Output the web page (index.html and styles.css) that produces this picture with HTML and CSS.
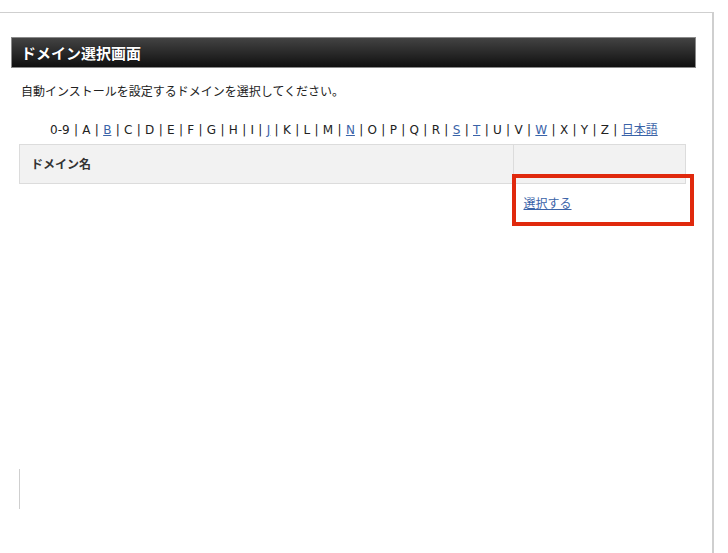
FILE: index.html
```html
<!DOCTYPE html>
<html lang="ja">
<head>
<meta charset="utf-8">
<link rel="stylesheet" href="styles.css">
</head>
<body>
<div class="frame">
  <div class="content">
    <h1 class="title">ドメイン選択画面</h1>
    <p class="intro">自動インストールを設定するドメインを選択してください。</p>
    <p class="alpha">0-9 | A | <a href="#">B</a> | C | D | E | F | G | H | I | <a href="#">J</a> | K | L | M | <a href="#">N</a> | O | P | Q | R | <a href="#">S</a> | <a href="#">T</a> | U | V | <a href="#">W</a> | X | Y | Z | <a href="#" class="jp">日本語</a></p>
    <div class="tablewrap">
      <table class="domains">
        <thead>
          <tr><th class="name">ドメイン名</th><th class="act"></th></tr>
        </thead>
        <tbody>
          <tr><td class="name"></td><td class="act"><a href="#">選択する</a></td></tr>
        </tbody>
      </table>
      <div class="highlight"></div>
    </div>
    <div class="stub"></div>
  </div>
</div>
</body>
</html>
```
FILE: styles.css
```css
html, body {
  margin: 0;
  padding: 0;
  background: #fff;
  height: 100%;
}
body {
  font-family: "Noto Sans CJK JP", "DejaVu Sans", sans-serif;
  color: #222;
  overflow: hidden;
}
.frame {
  margin-top: 12px;
  width: 714px;
  height: 541px;
  border-top: 1px solid #cfcfcf;
  border-right: 2px solid #cfcfcf;
  box-sizing: border-box;
}
.content {
  padding: 24px 0 0 11px;
}
.title {
  margin: 0;
  width: 685px;
  height: 31px;
  box-sizing: border-box;
  border: 1px solid #8a8a8a;
  background: linear-gradient(#434343, #101010);
  color: #fff;
  font-size: 15px;
  font-weight: bold;
  line-height: 29px;
  padding-left: 9px;
  text-shadow: 0 0 1px #000;
}
.intro {
  margin: 14px 0 0 10px;
  font-size: 12px;
  line-height: 18px;
}
.alpha {
  margin: 20px 0 0 39px;
  font-family: "DejaVu Sans", "Noto Sans CJK JP", sans-serif;
  font-size: 12px;
  line-height: 18px;
  word-spacing: 0.5px;
  white-space: nowrap;
  color: #222;
}
.alpha a, .domains a {
  color: #3a63a8;
  text-decoration: underline;
}
.alpha .jp {
  font-family: "Noto Sans CJK JP", sans-serif;
  font-size: 12px;
}
.tablewrap {
  position: relative;
  margin: 5px 0 0 8px;
  width: 667px;
}
.domains {
  width: 667px;
  border-collapse: collapse;
  font-size: 12px;
}
.domains th {
  height: 39px;
  box-sizing: border-box;
  background: #f2f2f2;
  border: 1px solid #dcdcdc;
  text-align: left;
  font-weight: bold;
  color: #333;
  padding: 0 0 2px 11px;
}
.domains th.act {
  width: 172px;
}
.domains td {
  height: 30px;
  padding: 10px 0 0 10px;
  line-height: 18px;
  vertical-align: top;
}
.highlight {
  position: absolute;
  left: 493px;
  top: 30px;
  width: 182px;
  height: 52px;
  box-sizing: border-box;
  border: 4px solid #e0290d;
}
.stub {
  margin: 245px 0 0 8px;
  width: 1px;
  height: 40px;
  background: #cfcfcf;
}
```
